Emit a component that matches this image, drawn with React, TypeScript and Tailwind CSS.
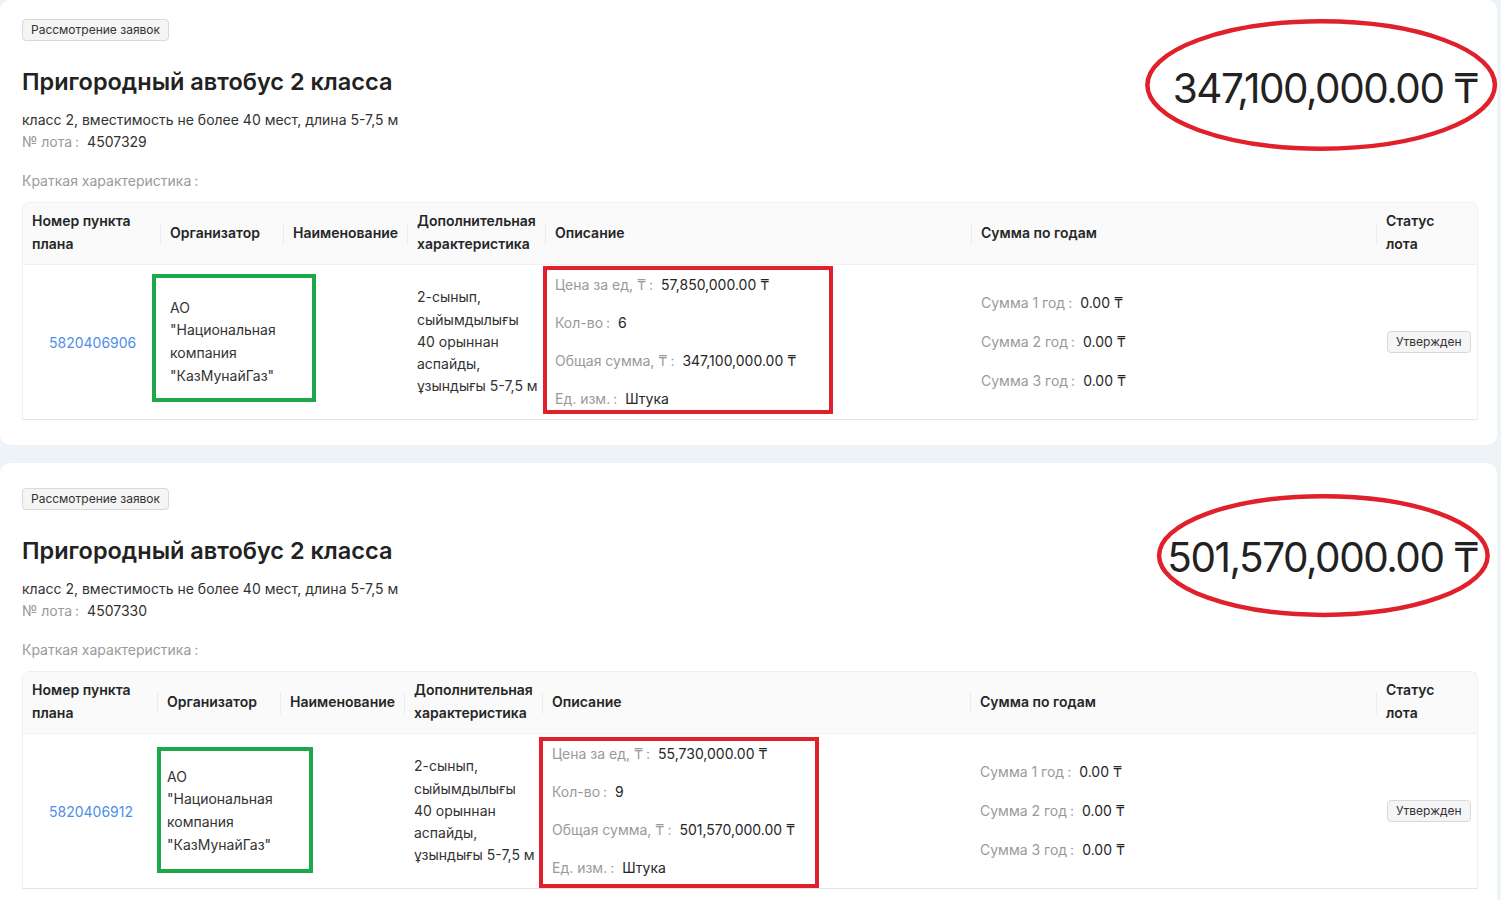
type Lot = {
  amount: string;
  lotNo: string;
  planNo: string;
  price: string;
  qty: string;
  total: string;
  cols: string;
  cardPad: string;
  ellipse: string;
  orgBox: string;
  descBox: string;
};

const lots: Lot[] = [
  {
    amount: "347,100,000.00 ₸",
    lotNo: "4507329",
    planNo: "5820406906",
    price: "57,850,000.00 ₸",
    qty: "6",
    total: "347,100,000.00 ₸",
    cols: "grid-cols-[138px_123px_124px_138px_426px_405px_102px]",
    cardPad: "pt-[19px]",
    ellipse: "-left-[31px] -right-[22px] -top-[46px] -bottom-[38px]",
    orgBox: "left-[129px] top-[71px] w-[164px] h-[128px]",
    descBox: "left-[520px] top-[63px] w-[290px] h-[148px]",
  },
  {
    amount: "501,570,000.00 ₸",
    lotNo: "4507330",
    planNo: "5820406912",
    price: "55,730,000.00 ₸",
    qty: "9",
    total: "501,570,000.00 ₸",
    cols: "grid-cols-[135px_123px_124px_138px_428px_406px_102px]",
    cardPad: "pt-[25px]",
    ellipse: "-left-[13px] -right-[15px] -top-[40px] -bottom-[35px]",
    orgBox: "left-[134px] top-[75px] w-[156px] h-[126px]",
    descBox: "left-[516px] top-[65px] w-[280px] h-[151px]",
  },
];

const headers = [
  ["Номер пункта", "плана"],
  ["Организатор"],
  ["Наименование"],
  ["Дополнительная", "характеристика"],
  ["Описание"],
  ["Сумма по годам"],
  ["Статус", "лота"],
];

function Tag({ children }: { children: React.ReactNode }) {
  return (
    <div className="flex">
      <span className="flex h-[22px] items-center rounded-[4px] border border-[#d9d9d9] bg-[#f5f5f5] px-[8px] text-[12px] leading-none text-[#333]">
        {children}
      </span>
    </div>
  );
}

function Field({ label, value }: { label: string; value: string }) {
  return (
    <div className="leading-[22px] whitespace-nowrap">
      <span className="text-[#9a9a9a]">
        {label}
        <span className="ml-[3px]">:</span>
      </span>
      <span className="ml-[8px] text-[#262626]">{value}</span>
    </div>
  );
}

function LotCard({ lot }: { lot: Lot }) {
  return (
    <div className={`rounded-[10px] bg-white pl-[22px] pr-[19px] pb-[25px] ${lot.cardPad}`}>
      <div className="flex items-start justify-between">
        <div>
          <Tag>Рассмотрение заявок</Tag>
          <h2 className="mt-[25px] text-[23.5px] leading-[32px] font-semibold text-[#222]">
            Пригородный автобус 2 класса
          </h2>
          <div className="mt-[11px] text-[14px] leading-[22px] text-[#333]">
            класс 2, вместимость не более 40 мест, длина 5-7,5 м
          </div>
          <div className="text-[14px] leading-[22px]">
            <span className="text-[#9a9a9a]">
              № лота<span className="ml-[3px]">:</span>
            </span>
            <span className="ml-[8px] text-[#333]">{lot.lotNo}</span>
          </div>
          <div className="mt-[17px] text-[14px] leading-[22px] text-[#9a9a9a]">
            Краткая характеристика<span className="ml-[3px]">:</span>
          </div>
        </div>
        <div className="relative mt-[45px]">
          <div className="text-[40.5px] leading-[50px] tracking-[-1.5px] text-[#222]">{lot.amount}</div>
          <div className={`pointer-events-none absolute ${lot.ellipse}`}>
            <svg className="h-full w-full" viewBox="0 0 100 100" preserveAspectRatio="none">
              <ellipse
                cx="50"
                cy="50"
                rx="48.5"
                ry="47.5"
                fill="none"
                stroke="#e0202a"
                strokeWidth="4.5"
                vectorEffect="non-scaling-stroke"
              />
            </svg>
          </div>
        </div>
      </div>

      <div className="relative mt-[10px] rounded-t-[8px] border border-[#f0f0f0] border-b-[#e4e4e4] text-[14px]">
        <div className={`grid ${lot.cols} h-[62px] rounded-t-[8px] border-b border-[#f0f0f0] bg-[#fafafa]`}>
          {headers.map((h, i) => (
            <div key={i} className="flex items-center">
              <div className="-mt-[3px] flex-1 px-[9px] leading-[23px] font-semibold text-[#262626]">
                {h.map((line) => (
                  <div key={line} className="whitespace-nowrap">{line}</div>
                ))}
              </div>
              {i < headers.length - 1 && <div className="h-[22px] w-px bg-[#ececec]" />}
            </div>
          ))}
        </div>

        <div className={`grid ${lot.cols} items-center py-[9px] text-[#333]`}>
          <div className="pl-[26px] text-[#4e8ee8]">{lot.planNo}</div>
          <div className="px-[9px] leading-[22.7px]">
            <div>АО</div>
            <div>"Национальная</div>
            <div>компания</div>
            <div>"КазМунайГаз"</div>
          </div>
          <div />
          <div className="pl-[9px] leading-[22.3px]">
            <div>2-сынып,</div>
            <div>сыйымдылығы</div>
            <div>40 орыннан</div>
            <div>аспайды,</div>
            <div className="whitespace-nowrap">ұзындығы 5-7,5 м</div>
          </div>
          <div className="flex flex-col gap-[16px] px-[9px]">
            <Field label="Цена за ед, ₸" value={lot.price} />
            <Field label="Кол-во" value={lot.qty} />
            <Field label="Общая сумма, ₸" value={lot.total} />
            <Field label="Ед. изм." value="Штука" />
          </div>
          <div className="flex flex-col gap-[17px] px-[9px]">
            <Field label="Сумма 1 год" value="0.00 ₸" />
            <Field label="Сумма 2 год" value="0.00 ₸" />
            <Field label="Сумма 3 год" value="0.00 ₸" />
          </div>
          <div className="pl-[10px]">
            <Tag>Утвержден</Tag>
          </div>
        </div>

        {/* highlight frames drawn over the row */}
        <div className={`pointer-events-none absolute border-[4px] border-[#1fa84a] ${lot.orgBox}`} />
        <div className={`pointer-events-none absolute border-[4px] border-[#e0202a] ${lot.descBox}`} />
      </div>
    </div>
  );
}

export default function App() {
  return (
    <div className="min-h-screen bg-[#eef3f8] pr-[4px] font-['Inter','Noto_Sans','DejaVu_Sans',sans-serif]">
      <div className="flex flex-col gap-[18px]">
        {lots.map((lot) => (
          <LotCard key={lot.lotNo} lot={lot} />
        ))}
      </div>
    </div>
  );
}
